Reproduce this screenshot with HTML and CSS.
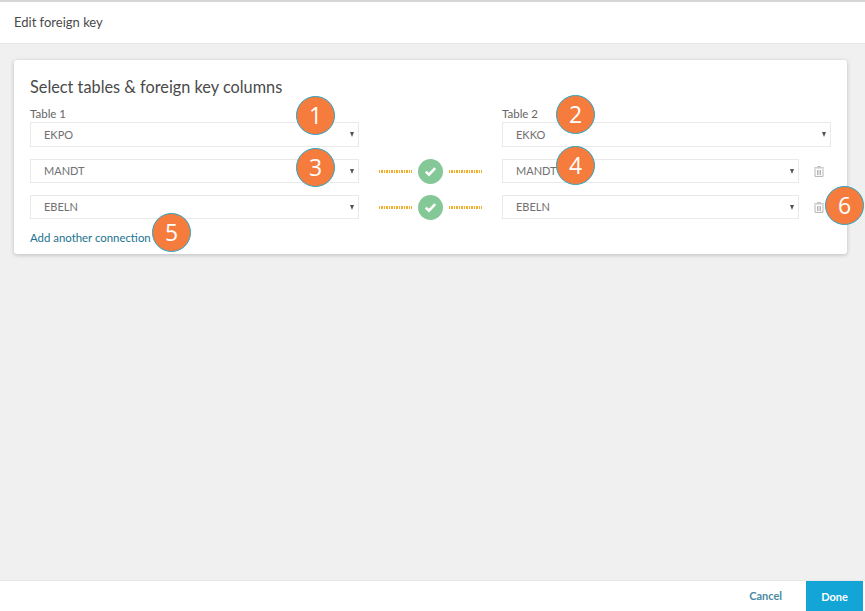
FILE: index.html
```html
<!DOCTYPE html>
<html lang="en">
<head>
    <meta charset="UTF-8">
    <title>Edit foreign key</title>
    <link rel="stylesheet" href="styles.css">
</head>
<body>
    <div class="page">
        <header class="top-bar">Edit foreign key</header>

        <main class="content">
            <section class="card">
                <h2>Select tables &amp; foreign key columns</h2>

                <div class="fk-row fk-head">
                    <div>
                        <label>Table 1</label>
                        <div class="select">EKPO<span class="caret"></span></div>
                    </div>
                    <div></div>
                    <div>
                        <label>Table 2</label>
                        <div class="select">EKKO<span class="caret"></span></div>
                    </div>
                </div>

                <div class="fk-row">
                    <div class="select">MANDT<span class="caret"></span></div>
                    <div class="link-state">
                        <span class="dots"></span>
                        <span class="check">
                            <svg width="13" height="11" viewBox="0 0 13 11"><path d="M1.8 5.6 5 8.6 11.2 2.2" fill="none" stroke="#fff" stroke-width="2.6"/></svg>
                        </span>
                        <span class="dots"></span>
                    </div>
                    <div class="with-trash">
                        <div class="select">MANDT<span class="caret"></span></div>
                        <svg class="trash" width="10" height="11" viewBox="0 0 10 11"><path d="M3.5 1.5V.6h3v.9M0 1.9h10M1 3v7.4h8V3M3.5 4v5M5 4v5M6.5 4v5" fill="none" stroke="#b5b5b5"/></svg>
                    </div>
                </div>

                <div class="fk-row">
                    <div class="select">EBELN<span class="caret"></span></div>
                    <div class="link-state">
                        <span class="dots"></span>
                        <span class="check">
                            <svg width="13" height="11" viewBox="0 0 13 11"><path d="M1.8 5.6 5 8.6 11.2 2.2" fill="none" stroke="#fff" stroke-width="2.6"/></svg>
                        </span>
                        <span class="dots"></span>
                    </div>
                    <div class="with-trash">
                        <div class="select">EBELN<span class="caret"></span></div>
                        <svg class="trash" width="10" height="11" viewBox="0 0 10 11"><path d="M3.5 1.5V.6h3v.9M0 1.9h10M1 3v7.4h8V3M3.5 4v5M5 4v5M6.5 4v5" fill="none" stroke="#b5b5b5"/></svg>
                    </div>
                </div>

                <a class="add-link" href="#">Add another connection</a>
            </section>
        </main>

        <footer class="bottom-bar">
            <a class="cancel" href="#">Cancel</a>
            <button class="done">Done</button>
        </footer>

        <span class="badge b1">1</span>
        <span class="badge b2">2</span>
        <span class="badge b3">3</span>
        <span class="badge b4">4</span>
        <span class="badge b5">5</span>
        <span class="badge b6">6</span>
    </div>
</body>
</html>
```

FILE: styles.css
```css
html, body {
    margin: 0;
    height: 100%;
}
body {
    font-family: "Lato", "Liberation Sans", sans-serif;
    color: #555;
    background-color: #f0f0f0;
    overflow: hidden;
}
.page {
    position: relative;
    display: flex;
    flex-direction: column;
    height: 611px;
}
.top-bar {
    height: 41px;
    line-height: 40px;
    padding-left: 14px;
    font-size: 13px;
    color: #4a4a4a;
    background-color: #fff;
    border-top: 2px solid #d6d6d6;
    border-bottom: 1px solid #e6e6e6;
}
.content {
    flex: 1;
    padding: 16px 18px 0 14px;
}
.card {
    box-sizing: border-box;
    height: 194px;
    padding: 16px;
    background-color: #fff;
    border-radius: 3px;
    box-shadow: 0 1px 4px rgba(0, 0, 0, 0.22);
}
h2 {
    margin: 0;
    height: 24px;
    line-height: 22px;
    font-size: 16.3px;
    font-weight: 400;
    color: #4a4a4a;
}
label {
    display: block;
    height: 15px;
    line-height: 13px;
    font-size: 11.5px;
    color: #666;
}
.fk-row {
    display: grid;
    grid-template-columns: 329px 143px 329px;
    grid-template-rows: 24px;
    margin-top: 12px;
}
.fk-head {
    grid-template-rows: 40px;
    margin-top: 7px;
}
.select {
    position: relative;
    box-sizing: border-box;
    height: 24px;
    line-height: 22px;
    padding-left: 13px;
    font-size: 11px;
    color: #707070;
    border: 1px solid #e9e9e9;
}
.fk-head .select {
    height: 25px;
    line-height: 24px;
}
.caret {
    position: absolute;
    right: 4px;
    top: 9px;
    border-left: 2.5px solid transparent;
    border-right: 2.5px solid transparent;
    border-top: 5px solid #555;
}
.link-state {
    display: flex;
    align-items: center;
    justify-content: center;
    gap: 6px;
}
.dots {
    width: 33px;
    height: 3px;
    background-image: repeating-linear-gradient(to right, #f0ae2a 0, #f0ae2a 1.2px, transparent 1.2px, transparent 2.5px);
}
.check {
    display: flex;
    flex: none;
    align-items: center;
    justify-content: center;
    width: 25px;
    height: 25px;
    border-radius: 50%;
    background-color: #85c898;
}
.with-trash {
    display: flex;
    align-items: center;
}
.with-trash .select {
    width: 297px;
}
.trash {
    margin-left: 15px;
}
.add-link {
    display: block;
    margin-top: 11px;
    line-height: 16px;
    font-size: 11.4px;
    color: #1a7390;
    text-decoration: none;
}
.bottom-bar {
    display: flex;
    align-items: stretch;
    justify-content: flex-end;
    height: 30px;
    padding-right: 2px;
    background-color: #fff;
    border-top: 1px solid #e6e6e6;
}
.cancel {
    margin-right: 24px;
    line-height: 30px;
    font-size: 11px;
    font-weight: 700;
    color: #4a8aa3;
    text-decoration: none;
}
.done {
    width: 57px;
    padding: 0;
    border: none;
    font-family: inherit;
    font-size: 11px;
    font-weight: 700;
    color: #fff;
    background-color: #12a5d6;
}
.badge {
    position: absolute;
    box-sizing: border-box;
    width: 39px;
    height: 39px;
    line-height: 36px;
    text-align: center;
    font-family: "Open Sans", sans-serif;
    font-size: 23px;
    color: #fff;
    background-color: #f57c3c;
    border: 1px solid #2ba3c4;
    border-radius: 50%;
}
.b1 { left: 296px; top: 96px; }
.b2 { left: 556px; top: 95px; }
.b3 { left: 296px; top: 148px; }
.b4 { left: 556px; top: 146px; }
.b5 { left: 152px; top: 213px; }
.b6 { left: 825px; top: 186px; }
```
